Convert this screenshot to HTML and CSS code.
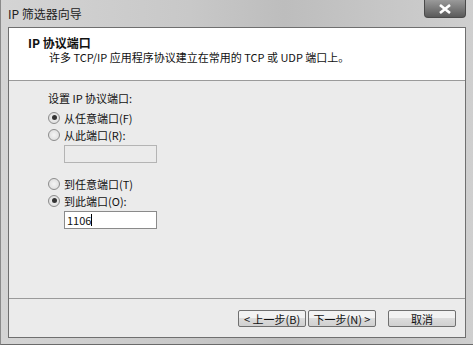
FILE: index.html
```html
<!DOCTYPE html>
<html lang="zh-CN">

<head>
  <meta charset="UTF-8" />
  <title>IP 筛选器向导</title>

  <link rel="stylesheet" href="styles.css">
</head>

<body>
  <div class="okno">
    <div class="titulek">
      <span>IP 筛选器向导</span>
      <div class="zavrit">
        <svg width="14" height="10" viewBox="0 0 14 10">
          <path d="M2 1 L12 9 M12 1 L2 9" stroke="#fff" stroke-width="2.6" />
        </svg>
      </div>
    </div>

    <div class="klient">
      <div class="hlavicka">
        <h1>IP 协议端口</h1>
        <p>许多 TCP/IP 应用程序协议建立在常用的 TCP 或 UDP 端口上。</p>
      </div>

      <div class="obsah">
        <p class="popis">设置 IP 协议端口:</p>
        <label class="volba"><span class="radio zapnuto"></span>从任意端口(F)</label>
        <label class="volba"><span class="radio"></span>从此端口(R):</label>
        <div class="pole vypnuto"></div>

        <label class="volba mezera"><span class="radio"></span>到任意端口(T)</label>
        <label class="volba"><span class="radio zapnuto"></span>到此端口(O):</label>
        <div class="pole">1106<span class="kurzor"></span></div>
      </div>

      <div class="paticka">
        <button class="tlacitko">&lt; 上一步(B)</button>
        <button class="tlacitko">下一步(N) &gt;</button>
        <button class="tlacitko zrusit">取消</button>
      </div>
    </div>
  </div>
</body>

</html>
```

FILE: styles.css
```css
body {
  margin: 0;
  font-family: "Noto Sans CJK SC", sans-serif;
  font-size: 11px;
  color: #111;
}

.okno {
  width: 473px;
  height: 345px;
  box-sizing: border-box;
  padding: 0 7px 6px 7px;
  display: flex;
  flex-direction: column;
  background: linear-gradient(90deg, #d4d4d4, #c8c8c8 40%, #bdbdbd 60%, #cfcfcf);
  border-left: 1px solid #8a8a8a;
  border-bottom: 1px solid #6a6a6a;
  position: relative;
}

.titulek {
  height: 27px;
  display: flex;
  align-items: center;
  padding-left: 0;
  font-size: 12px;
  color: #222;
}

.zavrit {
  position: absolute;
  top: 0;
  right: 7px;
  width: 42px;
  height: 18px;
  display: flex;
  align-items: center;
  justify-content: center;
  background: linear-gradient(#9a9a9a, #5a5a5a);
  border: 1px solid #4a4a4a;
  border-top: none;
  border-radius: 0 0 4px 4px;
  box-sizing: border-box;
}

.klient {
  flex: 1;
  display: flex;
  flex-direction: column;
  background: #ebebeb;
  border: 1px solid #6f6f6f;
}

.hlavicka {
  height: 53px;
  box-sizing: border-box;
  background: #fff;
  border-bottom: 1px solid #9a9a9a;
  padding: 8px 0 0 19px;
}

h1 {
  margin: 0;
  font-size: 12px;
  font-weight: bold;
  line-height: 14px;
}

.hlavicka p {
  margin: 0 0 0 21px;
  line-height: 15px;
}

.obsah {
  flex: 1;
  padding: 10px 0 0 39px;
  display: flex;
  flex-direction: column;
  align-items: flex-start;
}

.popis {
  margin: 0 0 3px 0;
  line-height: 15px;
}

.volba {
  display: flex;
  align-items: center;
  height: 17px;
}

.mezera {
  margin-top: 12px;
}

.radio {
  width: 10px;
  height: 10px;
  border-radius: 50%;
  border: 1px solid #8c8c8c;
  background: radial-gradient(#f4f4f4, #d8d8d8);
  margin-right: 4px;
  display: flex;
  align-items: center;
  justify-content: center;
}

.zapnuto::after {
  content: "";
  width: 5px;
  height: 5px;
  border-radius: 50%;
  background: #333;
}

.pole {
  width: 93px;
  height: 18px;
  box-sizing: border-box;
  margin: 2px 0 0 16px;
  border: 1px solid #8a8a8a;
  background: #fff;
  padding-left: 2px;
  line-height: 16px;
  display: flex;
  align-items: center;
}

.vypnuto {
  background: #ebebeb;
  border-color: #b4b4b4;
}

.kurzor {
  width: 1px;
  height: 12px;
  background: #000;
}

.paticka {
  height: 38px;
  border-top: 1px solid #9a9a9a;
  display: flex;
  align-items: center;
  justify-content: flex-end;
  padding-right: 9px;
  gap: 2px;
}

.tlacitko {
  width: 68px;
  height: 17px;
  padding: 0;
  font-family: inherit;
  font-size: 11px;
  border: 1px solid #707070;
  border-radius: 2px;
  background: linear-gradient(#f2f2f2 50%, #dcdcdc 50%, #d0d0d0);
  color: #111;
}

.zrusit {
  margin-left: 10px;
}
```
